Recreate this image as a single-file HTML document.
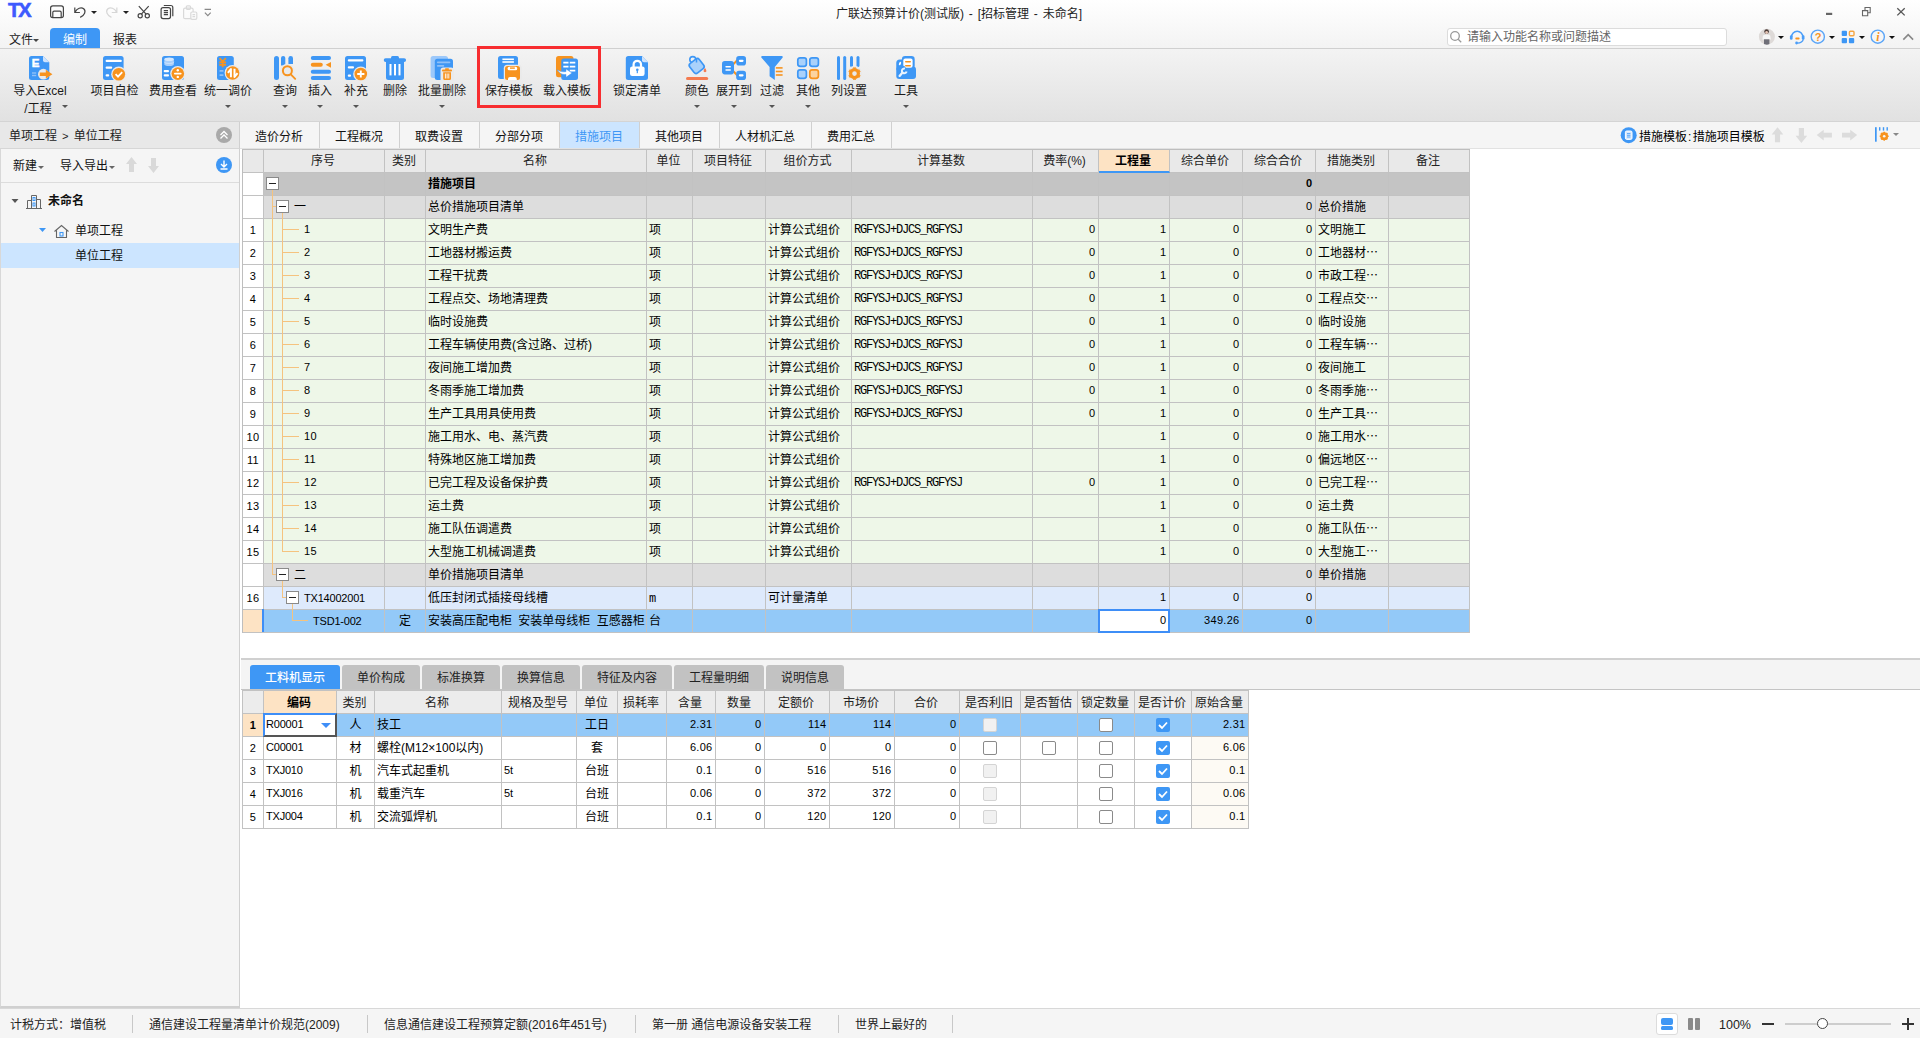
<!DOCTYPE html><html><head><meta charset="utf-8"><title>广联达预算计价</title><style>
*{box-sizing:border-box;margin:0;padding:0}
html,body{width:1920px;height:1038px;overflow:hidden;background:#fff}
body{position:relative;font-family:"Liberation Sans","Noto Sans CJK SC",sans-serif;font-size:12px;color:#000;line-height:1}
.ab{position:absolute}
.t{position:absolute;white-space:nowrap;line-height:14px;height:14px}
.c{position:absolute;white-space:nowrap;overflow:hidden;border-right:1px solid #c2c2c2;border-bottom:1px solid #c2c2c2;font-size:12px;line-height:22px;height:23px;padding:0 2px}
.r{text-align:right;padding-right:3px}
.m{text-align:center}
.num{font-family:"Liberation Mono","Noto Sans CJK SC",monospace;letter-spacing:-1.2px}
.n2{font-family:"Liberation Sans",sans-serif;font-size:11px;letter-spacing:0.3px}
.c.n2{line-height:20px}
.n2.cd{letter-spacing:-0.2px}
.c.r.n2{padding-right:2.5px}
.h{background:#e9e9e9;text-align:center;color:#222;padding:0 3px 0 1px}
.lbl{position:absolute;white-space:nowrap;text-align:center;font-size:12px;line-height:16px;color:#1a1a1a}
.dd{position:absolute;width:0;height:0;border-left:3px solid transparent;border-right:3px solid transparent;border-top:3px solid #555}
.cb{position:absolute;width:14px;height:14px;border:1px solid #8a8a8a;border-radius:2px;background:#fff}
.cbd{position:absolute;width:14px;height:14px;border:1px solid #d4d4d4;border-radius:2px;background:#f1f1f1}
.cbc{position:absolute;width:14px;height:14px;border-radius:2px;background:#3e97f5}
</style></head><body><div class="ab" style="left:0px;top:0px;width:1920px;height:48px;background:linear-gradient(#ffffff,#f3f3f3)"></div><div class="ab" style="left:0px;top:48px;width:1920px;height:1px;background:#d0d0d0"></div><div class="t" style="left:8px;top:0px;font-weight:bold;font-size:20px;line-height:20px;height:20px;color:#3d5afe;letter-spacing:-2px;-webkit-text-stroke:0.6px #3d5afe;font-family:'Liberation Sans',sans-serif">TX</div><svg class="ab" style="left:46px;top:2px" width="180" height="22" viewBox="0 0 180 22" fill="none" stroke="#444" stroke-width="1.2"><rect x="4.6" y="3.9" width="12.8" height="11.8" rx="2.2"/><path d="M6.8 15.7v-5.3a1.3 1.3 0 0 1 1.3-1.3h5.8a1.3 1.3 0 0 1 1.3 1.3v5.3"/><path d="M28.8 5.4v5.1h5.1 M29.2 10.1C31 6.3 35.2 4.6 37.7 6.8C40.4 9.2 38.6 13.2 34.2 15.4"/><path d="M70.85 5.4v5.1h-5.1 M70.45 10.1C68.65 6.3 64.45 4.6 61.95 6.8C59.25 9.2 61.05 13.2 65.45 15.4" stroke="#d6d6d6"/><path d="M92.8 4.2l7.3 8 M102.7 4.2l-7.3 8"/><circle cx="94.2" cy="13.7" r="2.1"/><circle cx="101.3" cy="13.7" r="2.1"/><rect x="115.1" y="5.6" width="9.4" height="11" rx="2"/><path d="M117.8 3.5h7a2 2 0 0 1 2 2v8.7 M117.8 8.6h4.2 M117.8 10.6h4.2 M117.8 12.6h4.2"/><g stroke="#d9d9d9"><rect x="137.6" y="6.1" width="9.5" height="10.6" rx="1.5"/><rect x="140.3" y="3.8" width="4.2" height="3.5" rx="1"/><rect x="144.8" y="10" width="6" height="7.3" rx="1.3" fill="#fbfbfb"/><path d="M146.5 12.6h2.6 M146.5 14.6h2.6"/></g><path d="M158.6 7.4h6.4 M158.9 10.6l2.9 3 2.9-3" stroke="#888"/></svg><div class="dd" style="left:91px;top:11px;border-top-color:#222"></div><div class="dd" style="left:123px;top:11px;border-top-color:#222"></div><div class="t" style="left:0px;top:7px;left:0;width:1918px;text-align:center;color:#222;word-spacing:1.5px">广联达预算计价(测试版) - [招标管理 - 未命名]</div><svg class="ab" style="left:1750px;top:0" width="170" height="48" viewBox="0 0 170 48" fill="none"><rect x="76" y="12.8" width="6.2" height="2.2" fill="#666"/><path d="M112.5 10.6h5.2v5.2h-5.2z M115 10.6v-3.1h5.2v5.2h-2.5" stroke="#666" stroke-width="1.1"/><path d="M147.3 8.2l7.4 7.2 M154.7 8.2l-7.4 7.2" stroke="#555" stroke-width="1.3"/><clipPath id="av"><circle cx="16.9" cy="36.7" r="8"/></clipPath><g clip-path="url(#av)"><rect x="8" y="28" width="18" height="18" fill="#dedad8"/><circle cx="16.6" cy="31.6" r="2.3" fill="#4a3a36"/><circle cx="16.6" cy="32.5" r="1.4" fill="#e6c6b6"/><path d="M13 35.5q3.6-2 7.2 0l.6 4h-8.4z" fill="#f6f6f6"/><rect x="14" y="39.3" width="5.4" height="6" fill="#6f6f78"/></g><path d="M41.5 37.2a5.7 5.9 0 0 1 11.4 0" stroke="#4a9df8" stroke-width="1.5"/><rect x="39.9" y="35.3" width="2.7" height="4.5" rx="1.3" fill="#4a9df8"/><rect x="51.8" y="35.3" width="2.7" height="4.5" rx="1.3" fill="#4a9df8"/><path d="M53.3 39.3a6.5 4.5 0 0 1-6 3.8" stroke="#4a9df8" stroke-width="1.3"/><circle cx="46.6" cy="43" r="1.4" fill="#4a9df8"/><rect x="45.3" y="37.6" width="4.3" height="1.8" rx=".9" fill="#f7931e"/><circle cx="67.8" cy="36.7" r="6.6" stroke="#5aa5f8" stroke-width="1.4"/><rect x="91.7" y="30.7" width="5.3" height="5.3" rx="1" fill="#3e97f5"/><rect x="99.4" y="31.2" width="4.6" height="4.6" rx="1" stroke="#f7a540" stroke-width="1.4"/><rect x="91.7" y="37.9" width="5.3" height="5.3" rx="1" fill="#3e97f5"/><rect x="98.9" y="37.9" width="5.3" height="5.3" rx="1" fill="#3e97f5"/><circle cx="127.8" cy="36.7" r="6.6" stroke="#5aa5f8" stroke-width="1.4"/><path d="M153.3 39.6l4.9-4.9 4.9 4.9" stroke="#888" stroke-width="1.6"/></svg><div class="t" style="left:9px;top:33px;color:#222">文件</div><div class="dd" style="left:33px;top:39px;border-top-color:#444"></div><div class="ab" style="left:50px;top:28px;width:50px;height:20px;background:#3e97f5;border-radius:4px 4px 0 0"></div><div class="t" style="left:50px;top:33px;width:50px;text-align:center;color:#fff">编制</div><div class="t" style="left:113px;top:33px;color:#222">报表</div><div class="ab" style="left:1447px;top:28px;width:280px;height:18px;background:#fff;border:1px solid #dcdcdc;border-radius:3px"></div><svg class="ab" style="left:1449px;top:30px" width="14" height="14" fill="none" stroke="#999" stroke-width="1.3"><circle cx="6" cy="6" r="4.3"/><path d="M9.2 9.2l3 3"/></svg><div class="t" style="left:1467px;top:30px;color:#666">请输入功能名称或问题描述</div><div class="t" style="left:1813px;top:31px;font-size:11px;font-weight:bold;color:#f7931e;width:10px;text-align:center;line-height:12px;height:12px">?</div><div class="t" style="left:1873px;top:31px;font-size:12px;font-style:italic;font-weight:bold;color:#f7931e;width:10px;text-align:center;line-height:12px;height:12px;font-family:'Liberation Serif',serif">i</div><div class="dd" style="left:1777.5px;top:36px;border-top-color:#111"></div><div class="dd" style="left:1828.5px;top:36px;border-top-color:#111"></div><div class="dd" style="left:1858.5px;top:36px;border-top-color:#111"></div><div class="dd" style="left:1888.5px;top:36px;border-top-color:#111"></div><div class="ab" style="left:0px;top:49px;width:1920px;height:73px;background:linear-gradient(#f3f3f3,#e1e1e1)"></div><div class="ab" style="left:0px;top:121px;width:1920px;height:1px;background:#d4d4d4"></div><svg class="ab" style="left:0;top:50px" width="960" height="36" viewBox="0 0 960 36"><path d="M31.5 6h11.5l6.3 6.3V27.5a2.5 2.5 0 0 1-2.5 2.5H31.5a2.5 2.5 0 0 1-2.5-2.5V8.5a2.5 2.5 0 0 1 2.5-2.5z" fill="#3e97f5"/><path d="M43 6l6.3 6.3h-4.3a2 2 0 0 1-2-2z" fill="#cfe4fd"/><text x="31.8" y="17.4" font-size="11.5" font-weight="bold" fill="#fff" stroke="#fff" stroke-width=".5" font-family="Liberation Sans,sans-serif">E</text><rect x="32" y="22.3" width="4.2" height="1.4" fill="#8fc0f8"/><rect x="32" y="24.8" width="4.2" height="1.4" fill="#8fc0f8"/><circle cx="43.4" cy="24.2" r="5.4" fill="#eaeaea"/><path d="M39.8 22.4h6v-2.6l6.6 4.4-6.6 4.4v-2.6h-6z" fill="#f7931e"/><rect x="103" y="6" width="20.6" height="24" rx="2.5" fill="#3e97f5"/><rect x="105.6" y="9.8" width="16.2" height="2.3" rx="1" fill="#fff"/><rect x="105.6" y="16.4" width="6.6" height="2.3" rx="1" fill="#fff"/><rect x="105.6" y="24.2" width="3.6" height="2.3" rx="1" fill="#fff"/><circle cx="118.8" cy="24.2" r="7.6" fill="#eaeaea"/><circle cx="118.8" cy="24.2" r="6.3" fill="#f7931e"/><path d="M115.6 24.2l2.4 2.4 4.2-4.4" stroke="#fff" stroke-width="1.8" fill="none"/><rect x="162" y="6" width="22" height="24" rx="2.5" fill="#3e97f5"/><path d="M164.3 9.2v5a4.8 1.8 0 0 0 9.6 0v-5z" fill="#a9cffb"/><ellipse cx="169.1" cy="9.2" rx="4.8" ry="1.8" fill="#d5e8fd"/><path d="M164.3 11.8a4.8 1.8 0 0 0 9.6 0" stroke="#d5e8fd" stroke-width=".7" fill="none"/><rect x="163.7" y="20" width="5.3" height="2.3" rx="1" fill="#fff"/><rect x="163.7" y="24.2" width="5.3" height="2.3" rx="1" fill="#fff"/><circle cx="177.8" cy="23.6" r="7.6" fill="#eaeaea"/><circle cx="177.8" cy="23.6" r="6.3" fill="#f7931e"/><rect x="174" y="22.8" width="7.6" height="1.7" rx=".8" fill="#fff"/><circle cx="177.8" cy="20.3" r="1.2" fill="#fff"/><circle cx="177.8" cy="26.9" r="1.2" fill="#fff"/><rect x="217" y="6" width="16.8" height="24" rx="2.5" fill="#3e97f5"/><path d="M219.5 8.2l3.2 3.4 3.2-3.4 M222.7 11.6v5.6 M219.3 12.4h6.8 M219.3 14.8h6.8" stroke="#f7931e" stroke-width="1.7" fill="none"/><rect x="219.4" y="20" width="4.2" height="1.8" rx=".9" fill="#8fc0f8"/><rect x="219.4" y="24.2" width="4.2" height="1.8" rx=".9" fill="#8fc0f8"/><circle cx="232.6" cy="23" r="8" fill="#eaeaea"/><circle cx="232.6" cy="23" r="6.8" fill="#f7931e"/><path d="M230.9 27.2v-8.2l-3 3.9 M234.5 18.8v8.2l3-3.9" fill="none" stroke="#fff" stroke-width="2" stroke-linejoin="round"/><rect x="274" y="6" width="5" height="24" rx="2.5" fill="#3e97f5"/><path d="M281 15.5v-7.4a2.15 2.15 0 0 1 4.3 0v7.4z" fill="#3e97f5"/><path d="M288.4 14v-5.8a2.3 2.3 0 0 1 4.6 0v5.8z" fill="#3e97f5"/><circle cx="287.4" cy="20.75" r="7" fill="#eaeaea"/><circle cx="287.4" cy="20.75" r="4.5" fill="none" stroke="#f7931e" stroke-width="2"/><path d="M290.8 24.3l4.4 4.5" stroke="#f7931e" stroke-width="1.9" stroke-linecap="round"/><rect x="310.8" y="6" width="20.2" height="4" rx="2" fill="#3e97f5"/><rect x="310.8" y="12.8" width="12" height="4" rx="2" fill="#f7931e"/><path d="M331 11.9v5.8l-5.4-2.9z" fill="#f7931e"/><rect x="310.8" y="19.8" width="20.2" height="4" rx="2" fill="#3e97f5"/><rect x="310.8" y="26" width="20.2" height="4" rx="2" fill="#3e97f5"/><rect x="345" y="6" width="21" height="24" rx="2.5" fill="#3e97f5"/><rect x="347.8" y="9.3" width="15.6" height="2.3" rx="1" fill="#fff"/><rect x="347.8" y="16.3" width="6.2" height="2.3" rx="1" fill="#fff"/><rect x="347.8" y="24.4" width="3.2" height="2.3" rx="1" fill="#fff"/><circle cx="360.8" cy="24" r="7.6" fill="#eaeaea"/><circle cx="360.8" cy="24" r="6.3" fill="#f7931e"/><path d="M357.2 24h7.2 M360.8 20.4v7.2" stroke="#fff" stroke-width="1.9"/><rect x="391" y="6" width="8" height="4" rx="1.5" fill="#3e97f5"/><rect x="383.75" y="8.2" width="22.3" height="3.8" rx="1.9" fill="#3e97f5"/><path d="M386 11h18v16.5a2.5 2.5 0 0 1-2.5 2.5h-13a2.5 2.5 0 0 1-2.5-2.5z" fill="#3e97f5"/><rect x="389.5" y="14" width="2" height="11.4" fill="#fff"/><rect x="394" y="14" width="2" height="11.4" fill="#fff"/><rect x="398.5" y="14" width="2" height="11.4" fill="#fff"/><rect x="430.6" y="6" width="17.4" height="22" rx="2.5" fill="#9cc8fa"/><rect x="434.8" y="8.8" width="18.2" height="21.2" rx="2.5" fill="#3e97f5"/><rect x="436.9" y="11.4" width="13.5" height="1.8" rx=".9" fill="#8fc0f8"/><rect x="436.9" y="15" width="7.3" height="1.7" rx=".8" fill="#8fc0f8"/><path d="M440.5 31v-10.5a3 3 0 0 1 3-3h7.5a3 3 0 0 1 3 3v10.5z" fill="#eaeaea"/><rect x="442" y="19.5" width="10" height="1.9" rx=".9" fill="#f7931e"/><rect x="445" y="18.3" width="4" height="1.6" rx=".7" fill="#f7931e"/><path d="M443.2 22.2h7.8v6.3a1.5 1.5 0 0 1-1.5 1.5h-4.8a1.5 1.5 0 0 1-1.5-1.5z" fill="#f7931e"/><path d="M445.4 23.5v5 M447.1 23.5v5 M448.8 23.5v5" stroke="#fff" stroke-width=".9"/><rect x="498" y="6" width="20" height="23" rx="2.5" fill="#3e97f5"/><rect x="502.4" y="8.5" width="11.5" height="1.6" fill="#fff"/><rect x="502.4" y="11.2" width="11.5" height="1.6" fill="#fff"/><rect x="503.8" y="14.8" width="18" height="17" rx="3.5" fill="#eaeaea"/><rect x="505" y="16" width="15" height="14" rx="2.5" fill="#f7931e"/><rect x="507.6" y="16.8" width="9.6" height="3.4" rx="1.5" fill="#fff"/><rect x="510" y="17.4" width="4.8" height="1.4" fill="#f7931e"/><path d="M508 30v-1a2 2 0 0 1 2-2h4.8a2 2 0 0 1 2 2v1z" fill="#fff"/><rect x="556" y="6" width="17.5" height="21.3" rx="2.5" fill="#f7931e"/><rect x="561.25" y="8.6" width="16.75" height="21.4" rx="2.5" fill="#3e97f5"/><path d="M563.3 12.6h5.2 M569.8 12.6h5.5 M563.3 16.6h5.2 M569.8 16.6h5.5 M569.8 20.6h5.5" stroke="#fff" stroke-width="1.6"/><path d="M557.2 19.8c2 3.6 5 5 8.8 4.6v2.9l6-4.2-6-4.2v2.7c-3.6.6-6.4-.2-8.8-1.8z" fill="#fff" stroke="#3e97f5" stroke-width=".5"/><path d="M628.3 6h13.7l6 6.3V27.5a2.5 2.5 0 0 1-2.5 2.5H628.3a2.5 2.5 0 0 1-2.5-2.5V8.5a2.5 2.5 0 0 1 2.5-2.5z" fill="#3e97f5"/><path d="M642 6l6 6.3h-4a2 2 0 0 1-2-2z" fill="#cfe4fd"/><rect x="630" y="16.4" width="14.6" height="9.6" rx="2.2" fill="#fff"/><path d="M633.6 17v-2.5a3.7 3.7 0 0 1 7.4 0v2.5" stroke="#fff" stroke-width="2.2" fill="none"/><circle cx="637.3" cy="19.8" r="1.3" fill="#3e97f5"/><rect x="636.7" y="20" width="1.2" height="3.2" fill="#3e97f5"/><circle cx="692.8" cy="9.6" r="3" fill="none" stroke="#3e97f5" stroke-width="1.6"/><rect x="690.7" y="10" width="12" height="12" rx="2.5" fill="#a9d1fb" stroke="#3e97f5" stroke-width="1.7" transform="rotate(-38 696.7 16)"/><path d="M696.5 8.5v4" stroke="#3e97f5" stroke-width="1.5"/><path d="M705 18c1.7 2.2 1.9 4.2 0 4.2s-1.7-2 0-4.2z" fill="#f47b50"/><rect x="686" y="27" width="22.2" height="3" rx="1.5" fill="#f47b50"/><path d="M733 14.5l4.5-4.5 M733 21l4.5 4.5" stroke="#f7931e" stroke-width="2"/><rect x="722" y="11" width="12" height="13.4" rx="2.8" fill="#3e97f5"/><rect x="725.3" y="16" width="5.7" height="1.6" rx=".8" fill="#fff"/><rect x="725.3" y="19.2" width="5.7" height="1.6" rx=".8" fill="#fff"/><rect x="736.2" y="6" width="9.8" height="9.5" rx="2.8" fill="#3e97f5"/><rect x="738.8" y="9.7" width="4.8" height="2.2" rx="1.1" fill="#fff"/><rect x="736.2" y="20.7" width="9.8" height="9.3" rx="2.8" fill="#3e97f5"/><rect x="738.8" y="24.2" width="4.8" height="2.2" rx="1.1" fill="#fff"/><path d="M762.3 6H781.7a1 1 0 0 1 .8 1.7L774.8 17V30L769.6 26.3V17L761.5 7.7a1 1 0 0 1 .8-1.7z" fill="#3e97f5"/><rect x="775.8" y="17.1" width="6.8" height="1.6" fill="#f7931e"/><rect x="775.8" y="20.7" width="6.8" height="1.6" fill="#f7931e"/><rect x="775.8" y="24.2" width="6.8" height="1.6" fill="#f7931e"/><rect x="797.8" y="7.8" width="8.6" height="8.6" rx="2.3" fill="#a9d1fb" stroke="#3e97f5" stroke-width="1.7"/><rect x="809.8" y="7.8" width="8.6" height="8.6" rx="2.3" fill="#a9d1fb" stroke="#3e97f5" stroke-width="1.7"/><rect x="797.8" y="19.8" width="8.6" height="8.6" rx="2.3" fill="#a9d1fb" stroke="#3e97f5" stroke-width="1.7"/><rect x="809.8" y="19.8" width="8.6" height="8.6" rx="2.3" fill="#fbd3a0" stroke="#f7931e" stroke-width="1.7"/><rect x="837" y="6" width="3" height="24" rx="1.5" fill="#3e97f5"/><rect x="843.2" y="6" width="3" height="24" rx="1.5" fill="#3e97f5"/><rect x="850" y="6" width="3" height="11" rx="1.5" fill="#3e97f5"/><rect x="856.5" y="6" width="3" height="11" rx="1.5" fill="#3e97f5"/><circle cx="854.5" cy="23.6" r="7.6" fill="#eaeaea"/><circle cx="854.5" cy="23.6" r="3.9" fill="none" stroke="#f7931e" stroke-width="3.2"/><path d="M858.83 26.1L859.87 26.7" stroke="#f7931e" stroke-width="3" stroke-linecap="butt"/><path d="M854.5 28.6L854.5 29.8" stroke="#f7931e" stroke-width="3" stroke-linecap="butt"/><path d="M850.17 26.1L849.13 26.7" stroke="#f7931e" stroke-width="3" stroke-linecap="butt"/><path d="M850.17 21.1L849.13 20.5" stroke="#f7931e" stroke-width="3" stroke-linecap="butt"/><path d="M854.5 18.6L854.5 17.4" stroke="#f7931e" stroke-width="3" stroke-linecap="butt"/><path d="M858.83 21.1L859.87 20.5" stroke="#f7931e" stroke-width="3" stroke-linecap="butt"/><rect x="896.25" y="9.5" width="9" height="12" rx="3.5" fill="#3e97f5"/><rect x="896.25" y="16.5" width="19.75" height="12.5" rx="3" fill="#3e97f5"/><rect x="901.9" y="6" width="12.8" height="13" rx="3.2" fill="#3e97f5"/><rect x="903.3" y="8.6" width="9.3" height="9.2" rx="2" fill="#fff"/><rect x="905" y="11" width="6" height="1.6" rx=".8" fill="#f7931e"/><rect x="905" y="15" width="6" height="1.6" rx=".8" fill="#f7931e"/><path d="M904 15.5l2 2.5h-6z" fill="#3e97f5"/><ellipse cx="900" cy="13.5" rx="1" ry="1.9" fill="#fff" transform="rotate(20 900 13.5)"/><path d="M899.6 25.9l2.9-3.4" stroke="#eaf4ff" stroke-width="2.3" stroke-linecap="round"/><path d="M905 18.6a2.4 2.4 0 1 0 1.6 2.9" stroke="#eaf4ff" stroke-width="2" fill="none"/></svg><div class="lbl" style="left:0px;top:83px;width:80px">导入Excel</div><div class="lbl" style="left:74.5px;top:83px;width:80px">项目自检</div><div class="lbl" style="left:133px;top:83px;width:80px">费用查看</div><div class="lbl" style="left:188px;top:83px;width:80px">统一调价</div><div class="dd" style="left:225px;top:105px;border-top-color:#555"></div><div class="lbl" style="left:245px;top:83px;width:80px">查询</div><div class="dd" style="left:282px;top:105px;border-top-color:#555"></div><div class="lbl" style="left:280px;top:83px;width:80px">插入</div><div class="dd" style="left:317px;top:105px;border-top-color:#555"></div><div class="lbl" style="left:316px;top:83px;width:80px">补充</div><div class="dd" style="left:353px;top:105px;border-top-color:#555"></div><div class="lbl" style="left:355px;top:83px;width:80px">删除</div><div class="lbl" style="left:402px;top:83px;width:80px">批量删除</div><div class="dd" style="left:439px;top:105px;border-top-color:#555"></div><div class="lbl" style="left:469px;top:83px;width:80px">保存模板</div><div class="lbl" style="left:527px;top:83px;width:80px">载入模板</div><div class="lbl" style="left:597px;top:83px;width:80px">锁定清单</div><div class="lbl" style="left:657px;top:83px;width:80px">颜色</div><div class="dd" style="left:694px;top:105px;border-top-color:#555"></div><div class="lbl" style="left:694px;top:83px;width:80px">展开到</div><div class="dd" style="left:731px;top:105px;border-top-color:#555"></div><div class="lbl" style="left:732px;top:83px;width:80px">过滤</div><div class="dd" style="left:769px;top:105px;border-top-color:#555"></div><div class="lbl" style="left:768px;top:83px;width:80px">其他</div><div class="dd" style="left:805px;top:105px;border-top-color:#555"></div><div class="lbl" style="left:809px;top:83px;width:80px">列设置</div><div class="lbl" style="left:866px;top:83px;width:80px">工具</div><div class="dd" style="left:903px;top:105px;border-top-color:#555"></div><div class="lbl" style="left:-2px;top:101px;width:80px">/工程</div><div class="dd" style="left:62px;top:105px;border-top-color:#555"></div><div class="ab" style="left:477px;top:46px;width:124px;height:61.5px;border:3px solid #f72d30"></div><div class="ab" style="left:0px;top:122px;width:240px;height:886px;background:#f5f5f5;border-right:1px solid #d0d0d0;border-left:1px solid #d8d8d8;border-bottom:2px solid #d0d0d0"></div><div class="ab" style="left:0px;top:122px;width:240px;height:27px;background:#e8e8e8;border-bottom:1px solid #d6d6d6;border-right:1px solid #d0d0d0"></div><div class="t" style="left:9px;top:129px;color:#222">单项工程<span style="font-family:'Liberation Mono',monospace;font-size:11px;padding:0 5px 0 5px">&gt;</span>单位工程</div><svg class="ab" style="left:216px;top:127px" width="16" height="16"><circle cx="8" cy="8" r="8" fill="#a9a9a9"/><path d="M4.5 8l3.5-3.5 3.5 3.5 M4.5 11.5l3.5-3.5 3.5 3.5" stroke="#fff" stroke-width="1.3" fill="none"/></svg><div class="t" style="left:13px;top:159px;color:#111">新建</div><div class="dd" style="left:38px;top:166px;border-top-color:#666"></div><div class="t" style="left:60px;top:159px;color:#111">导入导出</div><div class="dd" style="left:109px;top:166px;border-top-color:#666"></div><svg class="ab" style="left:124px;top:156px" width="40" height="18" fill="#d9d9d9"><path d="M7.5 1l5.5 7h-3v8h-5v-8h-3z"/><path d="M29.5 17l5.5-7h-3v-8h-5v8h-3z"/></svg><svg class="ab" style="left:216px;top:157px" width="16" height="16"><circle cx="8" cy="8" r="8" fill="#3e97f5"/><path d="M8 3.5v6 M5 7l3 3 3-3 M4.5 12h7" stroke="#fff" stroke-width="1.4" fill="none"/></svg><div class="ab" style="left:1px;top:182px;width:238px;height:1px;background:#dcdcdc"></div><div class="ab" style="left:1px;top:243px;width:238px;height:25px;background:#cce5ff"></div><svg class="ab" style="left:10px;top:192.5px" width="70" height="50" fill="none"><path d="M1.5 6h7l-3.5 4z" fill="#555"/><path d="M17.5 15.5v-8h4v8 M21.5 15.5v-13h5v13 M26.5 15.5v-9h4v9 M16 15.5h16" stroke="#666" stroke-width="1"/><rect x="23" y="4.5" width="2" height="3" fill="none" stroke="#3e97f5" stroke-width="1"/><rect x="23" y="10" width="2" height="3" fill="none" stroke="#3e97f5" stroke-width="1"/><path d="M29 35h7l-3.5 4z" fill="#3e97f5"/><path d="M44.5 38.5l7-6 7 6 M46.5 37.5v7h10v-7" stroke="#666" stroke-width="1.1"/><rect x="50" y="39.5" width="3" height="3.5" fill="none" stroke="#3e97f5" stroke-width="1.1"/></svg><div class="t" style="left:48px;top:194px;font-weight:bold;color:#111">未命名</div><div class="t" style="left:75px;top:224px;color:#111">单项工程</div><div class="t" style="left:75px;top:249px;color:#111">单位工程</div><div class="ab" style="left:240px;top:122px;width:1680px;height:27px;background:#f5f5f5"></div><div class="ab" style="left:240px;top:148px;width:1680px;height:1px;background:#e2e2e2"></div><div class="ab" style="left:240px;top:122px;width:80px;height:26px;border-right:1px solid #d0d0d0"></div><div class="t" style="left:239px;top:130px;width:80px;text-align:center;color:#111">造价分析</div><div class="ab" style="left:320px;top:122px;width:80px;height:26px;border-right:1px solid #d0d0d0"></div><div class="t" style="left:319px;top:130px;width:80px;text-align:center;color:#111">工程概况</div><div class="ab" style="left:400px;top:122px;width:80px;height:26px;border-right:1px solid #d0d0d0"></div><div class="t" style="left:399px;top:130px;width:80px;text-align:center;color:#111">取费设置</div><div class="ab" style="left:480px;top:122px;width:80px;height:26px;border-right:1px solid #d0d0d0"></div><div class="t" style="left:479px;top:130px;width:80px;text-align:center;color:#111">分部分项</div><div class="ab" style="left:560px;top:122px;width:80px;height:26px;background:#cce5ff;border-right:1px solid #d0d0d0"></div><div class="t" style="left:559px;top:130px;width:80px;text-align:center;color:#3e97f5">措施项目</div><div class="ab" style="left:640px;top:122px;width:80px;height:26px;border-right:1px solid #d0d0d0"></div><div class="t" style="left:639px;top:130px;width:80px;text-align:center;color:#111">其他项目</div><div class="ab" style="left:720px;top:122px;width:92px;height:26px;border-right:1px solid #d0d0d0"></div><div class="t" style="left:719px;top:130px;width:92px;text-align:center;color:#111">人材机汇总</div><div class="ab" style="left:812px;top:122px;width:80px;height:26px;border-right:1px solid #d0d0d0"></div><div class="t" style="left:811px;top:130px;width:80px;text-align:center;color:#111">费用汇总</div><svg class="ab" style="left:1620px;top:127px" width="18" height="17"><circle cx="8.7" cy="8.2" r="8" fill="#3e97f5"/><rect x="5.4" y="4" width="6.6" height="8.4" rx="1.3" fill="#d6e9fe" stroke="#fff" stroke-width="1"/><path d="M7 6.6h3.4 M7 8.3h3.4 M7 10h3.4" stroke="#3e97f5" stroke-width=".8"/></svg><div class="t" style="left:1639px;top:130px;color:#000">措施模板<span style="padding:0 1.5px 0 1px">:</span>措施项目模板</div><svg class="ab" style="left:1770px;top:126px" width="90" height="18" fill="#dcdcdc"><path d="M7.5 1.2l5.8 7.3h-3.2v7.7h-5.2v-7.7h-3.2z"/><path d="M31.4 17l5.8-7.3h-3.2v-7.7h-5.2v7.7h-3.2z"/><path d="M46.7 9.1l7-5.4v3h8.2v4.8h-8.2v3z"/><path d="M87.2 9.1l-7-5.4v3h-8.2v4.8h8.2v3z"/></svg><svg class="ab" style="left:1874px;top:127px" width="16" height="16"><rect x="1" y="0.2" width="1.7" height="14.5" fill="#3e97f5"/><rect x="5" y="0.2" width="1.4" height="3.4" fill="#3e97f5"/><rect x="8.8" y="0.2" width="1.4" height="3.4" fill="#3e97f5"/><rect x="12.5" y="0.2" width="1.4" height="3.4" fill="#3e97f5"/><circle cx="10.2" cy="9.2" r="2.7" fill="none" stroke="#f7931e" stroke-width="2.4"/><path d="M10.2 4.7v9 M5.7 9.2h9 M7 6l6.4 6.4 M13.4 6l-6.4 6.4" stroke="#f7931e" stroke-width="1.5"/><circle cx="10.2" cy="9.2" r="1.3" fill="#f5f5f5"/></svg><div class="dd" style="left:1892.5px;top:133px;border-top-color:#888"></div><div class="ab" style="left:242px;top:149px;width:1228px;height:1px;background:#bebebe"></div><div class="ab" style="left:242px;top:149px;width:1px;height:484px;background:#bebebe"></div><div class="ab" style="left:1469px;top:149px;width:1px;height:484px;background:#bebebe"></div><div class="c h" style="left:243px;top:150px;width:21px;height:23px;line-height:23px;"></div><div class="c h" style="left:264px;top:150px;width:121px;height:23px;line-height:23px;">序号</div><div class="c h" style="left:385px;top:150px;width:41px;height:23px;line-height:23px;">类别</div><div class="c h" style="left:426px;top:150px;width:221px;height:23px;line-height:23px;">名称</div><div class="c h" style="left:647px;top:150px;width:46px;height:23px;line-height:23px;">单位</div><div class="c h" style="left:693px;top:150px;width:73px;height:23px;line-height:23px;">项目特征</div><div class="c h" style="left:766px;top:150px;width:86px;height:23px;line-height:23px;">组价方式</div><div class="c h" style="left:852px;top:150px;width:181px;height:23px;line-height:23px;">计算基数</div><div class="c h" style="left:1033px;top:150px;width:66px;height:23px;line-height:23px;">费率(%)</div><div class="c h" style="left:1099px;top:150px;width:71px;height:23px;line-height:23px;background:#fde3c4;font-weight:bold;color:#000;border-bottom:2px solid #3e97f5;">工程量</div><div class="c h" style="left:1170px;top:150px;width:73px;height:23px;line-height:23px;">综合单价</div><div class="c h" style="left:1243px;top:150px;width:73px;height:23px;line-height:23px;">综合合价</div><div class="c h" style="left:1316px;top:150px;width:73px;height:23px;line-height:23px;">措施类别</div><div class="c h" style="left:1389px;top:150px;width:81px;height:23px;line-height:23px;">备注</div><div class="c m n2" style="left:243px;top:173px;width:21px;background:#fff;padding:0;padding-top:1px"></div><div class="c " style="left:264px;top:173px;width:121px;background:#c4c4c4;"></div><div class="c m" style="left:385px;top:173px;width:41px;background:#c4c4c4;"></div><div class="c " style="left:426px;top:173px;width:221px;background:#c4c4c4;"><b>措施项目</b></div><div class="c " style="left:647px;top:173px;width:46px;background:#c4c4c4;"></div><div class="c " style="left:693px;top:173px;width:73px;background:#c4c4c4;"></div><div class="c " style="left:766px;top:173px;width:86px;background:#c4c4c4;"></div><div class="c num" style="left:852px;top:173px;width:181px;background:#c4c4c4;"></div><div class="c r n2" style="left:1033px;top:173px;width:66px;background:#c4c4c4;"></div><div class="c r n2" style="left:1099px;top:173px;width:71px;background:#c4c4c4;"></div><div class="c r n2" style="left:1170px;top:173px;width:73px;background:#c4c4c4;"></div><div class="c r n2" style="left:1243px;top:173px;width:73px;background:#c4c4c4;"><b>0</b></div><div class="c " style="left:1316px;top:173px;width:73px;background:#c4c4c4;"></div><div class="c " style="left:1389px;top:173px;width:81px;background:#c4c4c4;"></div><div class="c m n2" style="left:243px;top:196px;width:21px;background:#fff;padding:0;padding-top:1px"></div><div class="c " style="left:264px;top:196px;width:121px;background:#dddddd;"></div><div class="c m" style="left:385px;top:196px;width:41px;background:#dddddd;"></div><div class="c " style="left:426px;top:196px;width:221px;background:#dddddd;">总价措施项目清单</div><div class="c " style="left:647px;top:196px;width:46px;background:#dddddd;"></div><div class="c " style="left:693px;top:196px;width:73px;background:#dddddd;"></div><div class="c " style="left:766px;top:196px;width:86px;background:#dddddd;"></div><div class="c num" style="left:852px;top:196px;width:181px;background:#dddddd;"></div><div class="c r n2" style="left:1033px;top:196px;width:66px;background:#dddddd;"></div><div class="c r n2" style="left:1099px;top:196px;width:71px;background:#dddddd;"></div><div class="c r n2" style="left:1170px;top:196px;width:73px;background:#dddddd;"></div><div class="c r n2" style="left:1243px;top:196px;width:73px;background:#dddddd;">0</div><div class="c " style="left:1316px;top:196px;width:73px;background:#dddddd;">总价措施</div><div class="c " style="left:1389px;top:196px;width:81px;background:#dddddd;"></div><div class="c m n2" style="left:243px;top:219px;width:21px;background:#fff;padding:0;padding-top:1px">1</div><div class="c " style="left:264px;top:219px;width:121px;background:#eef7e8;"></div><div class="c m" style="left:385px;top:219px;width:41px;background:#eef7e8;"></div><div class="c " style="left:426px;top:219px;width:221px;background:#eef7e8;">文明生产费</div><div class="c " style="left:647px;top:219px;width:46px;background:#eef7e8;">项</div><div class="c " style="left:693px;top:219px;width:73px;background:#eef7e8;"></div><div class="c " style="left:766px;top:219px;width:86px;background:#eef7e8;">计算公式组价</div><div class="c num" style="left:852px;top:219px;width:181px;background:#eef7e8;">RGFYSJ+DJCS_RGFYSJ</div><div class="c r n2" style="left:1033px;top:219px;width:66px;background:#eef7e8;">0</div><div class="c r n2" style="left:1099px;top:219px;width:71px;background:#eef7e8;">1</div><div class="c r n2" style="left:1170px;top:219px;width:73px;background:#eef7e8;">0</div><div class="c r n2" style="left:1243px;top:219px;width:73px;background:#eef7e8;">0</div><div class="c " style="left:1316px;top:219px;width:73px;background:#eef7e8;">文明施工</div><div class="c " style="left:1389px;top:219px;width:81px;background:#eef7e8;"></div><div class="c m n2" style="left:243px;top:242px;width:21px;background:#fff;padding:0;padding-top:1px">2</div><div class="c " style="left:264px;top:242px;width:121px;background:#eef7e8;"></div><div class="c m" style="left:385px;top:242px;width:41px;background:#eef7e8;"></div><div class="c " style="left:426px;top:242px;width:221px;background:#eef7e8;">工地器材搬运费</div><div class="c " style="left:647px;top:242px;width:46px;background:#eef7e8;">项</div><div class="c " style="left:693px;top:242px;width:73px;background:#eef7e8;"></div><div class="c " style="left:766px;top:242px;width:86px;background:#eef7e8;">计算公式组价</div><div class="c num" style="left:852px;top:242px;width:181px;background:#eef7e8;">RGFYSJ+DJCS_RGFYSJ</div><div class="c r n2" style="left:1033px;top:242px;width:66px;background:#eef7e8;">0</div><div class="c r n2" style="left:1099px;top:242px;width:71px;background:#eef7e8;">1</div><div class="c r n2" style="left:1170px;top:242px;width:73px;background:#eef7e8;">0</div><div class="c r n2" style="left:1243px;top:242px;width:73px;background:#eef7e8;">0</div><div class="c " style="left:1316px;top:242px;width:73px;background:#eef7e8;">工地器材⋯</div><div class="c " style="left:1389px;top:242px;width:81px;background:#eef7e8;"></div><div class="c m n2" style="left:243px;top:265px;width:21px;background:#fff;padding:0;padding-top:1px">3</div><div class="c " style="left:264px;top:265px;width:121px;background:#eef7e8;"></div><div class="c m" style="left:385px;top:265px;width:41px;background:#eef7e8;"></div><div class="c " style="left:426px;top:265px;width:221px;background:#eef7e8;">工程干扰费</div><div class="c " style="left:647px;top:265px;width:46px;background:#eef7e8;">项</div><div class="c " style="left:693px;top:265px;width:73px;background:#eef7e8;"></div><div class="c " style="left:766px;top:265px;width:86px;background:#eef7e8;">计算公式组价</div><div class="c num" style="left:852px;top:265px;width:181px;background:#eef7e8;">RGFYSJ+DJCS_RGFYSJ</div><div class="c r n2" style="left:1033px;top:265px;width:66px;background:#eef7e8;">0</div><div class="c r n2" style="left:1099px;top:265px;width:71px;background:#eef7e8;">1</div><div class="c r n2" style="left:1170px;top:265px;width:73px;background:#eef7e8;">0</div><div class="c r n2" style="left:1243px;top:265px;width:73px;background:#eef7e8;">0</div><div class="c " style="left:1316px;top:265px;width:73px;background:#eef7e8;">市政工程⋯</div><div class="c " style="left:1389px;top:265px;width:81px;background:#eef7e8;"></div><div class="c m n2" style="left:243px;top:288px;width:21px;background:#fff;padding:0;padding-top:1px">4</div><div class="c " style="left:264px;top:288px;width:121px;background:#eef7e8;"></div><div class="c m" style="left:385px;top:288px;width:41px;background:#eef7e8;"></div><div class="c " style="left:426px;top:288px;width:221px;background:#eef7e8;">工程点交、场地清理费</div><div class="c " style="left:647px;top:288px;width:46px;background:#eef7e8;">项</div><div class="c " style="left:693px;top:288px;width:73px;background:#eef7e8;"></div><div class="c " style="left:766px;top:288px;width:86px;background:#eef7e8;">计算公式组价</div><div class="c num" style="left:852px;top:288px;width:181px;background:#eef7e8;">RGFYSJ+DJCS_RGFYSJ</div><div class="c r n2" style="left:1033px;top:288px;width:66px;background:#eef7e8;">0</div><div class="c r n2" style="left:1099px;top:288px;width:71px;background:#eef7e8;">1</div><div class="c r n2" style="left:1170px;top:288px;width:73px;background:#eef7e8;">0</div><div class="c r n2" style="left:1243px;top:288px;width:73px;background:#eef7e8;">0</div><div class="c " style="left:1316px;top:288px;width:73px;background:#eef7e8;">工程点交⋯</div><div class="c " style="left:1389px;top:288px;width:81px;background:#eef7e8;"></div><div class="c m n2" style="left:243px;top:311px;width:21px;background:#fff;padding:0;padding-top:1px">5</div><div class="c " style="left:264px;top:311px;width:121px;background:#eef7e8;"></div><div class="c m" style="left:385px;top:311px;width:41px;background:#eef7e8;"></div><div class="c " style="left:426px;top:311px;width:221px;background:#eef7e8;">临时设施费</div><div class="c " style="left:647px;top:311px;width:46px;background:#eef7e8;">项</div><div class="c " style="left:693px;top:311px;width:73px;background:#eef7e8;"></div><div class="c " style="left:766px;top:311px;width:86px;background:#eef7e8;">计算公式组价</div><div class="c num" style="left:852px;top:311px;width:181px;background:#eef7e8;">RGFYSJ+DJCS_RGFYSJ</div><div class="c r n2" style="left:1033px;top:311px;width:66px;background:#eef7e8;">0</div><div class="c r n2" style="left:1099px;top:311px;width:71px;background:#eef7e8;">1</div><div class="c r n2" style="left:1170px;top:311px;width:73px;background:#eef7e8;">0</div><div class="c r n2" style="left:1243px;top:311px;width:73px;background:#eef7e8;">0</div><div class="c " style="left:1316px;top:311px;width:73px;background:#eef7e8;">临时设施</div><div class="c " style="left:1389px;top:311px;width:81px;background:#eef7e8;"></div><div class="c m n2" style="left:243px;top:334px;width:21px;background:#fff;padding:0;padding-top:1px">6</div><div class="c " style="left:264px;top:334px;width:121px;background:#eef7e8;"></div><div class="c m" style="left:385px;top:334px;width:41px;background:#eef7e8;"></div><div class="c " style="left:426px;top:334px;width:221px;background:#eef7e8;">工程车辆使用费(含过路、过桥)</div><div class="c " style="left:647px;top:334px;width:46px;background:#eef7e8;">项</div><div class="c " style="left:693px;top:334px;width:73px;background:#eef7e8;"></div><div class="c " style="left:766px;top:334px;width:86px;background:#eef7e8;">计算公式组价</div><div class="c num" style="left:852px;top:334px;width:181px;background:#eef7e8;">RGFYSJ+DJCS_RGFYSJ</div><div class="c r n2" style="left:1033px;top:334px;width:66px;background:#eef7e8;">0</div><div class="c r n2" style="left:1099px;top:334px;width:71px;background:#eef7e8;">1</div><div class="c r n2" style="left:1170px;top:334px;width:73px;background:#eef7e8;">0</div><div class="c r n2" style="left:1243px;top:334px;width:73px;background:#eef7e8;">0</div><div class="c " style="left:1316px;top:334px;width:73px;background:#eef7e8;">工程车辆⋯</div><div class="c " style="left:1389px;top:334px;width:81px;background:#eef7e8;"></div><div class="c m n2" style="left:243px;top:357px;width:21px;background:#fff;padding:0;padding-top:1px">7</div><div class="c " style="left:264px;top:357px;width:121px;background:#eef7e8;"></div><div class="c m" style="left:385px;top:357px;width:41px;background:#eef7e8;"></div><div class="c " style="left:426px;top:357px;width:221px;background:#eef7e8;">夜间施工增加费</div><div class="c " style="left:647px;top:357px;width:46px;background:#eef7e8;">项</div><div class="c " style="left:693px;top:357px;width:73px;background:#eef7e8;"></div><div class="c " style="left:766px;top:357px;width:86px;background:#eef7e8;">计算公式组价</div><div class="c num" style="left:852px;top:357px;width:181px;background:#eef7e8;">RGFYSJ+DJCS_RGFYSJ</div><div class="c r n2" style="left:1033px;top:357px;width:66px;background:#eef7e8;">0</div><div class="c r n2" style="left:1099px;top:357px;width:71px;background:#eef7e8;">1</div><div class="c r n2" style="left:1170px;top:357px;width:73px;background:#eef7e8;">0</div><div class="c r n2" style="left:1243px;top:357px;width:73px;background:#eef7e8;">0</div><div class="c " style="left:1316px;top:357px;width:73px;background:#eef7e8;">夜间施工</div><div class="c " style="left:1389px;top:357px;width:81px;background:#eef7e8;"></div><div class="c m n2" style="left:243px;top:380px;width:21px;background:#fff;padding:0;padding-top:1px">8</div><div class="c " style="left:264px;top:380px;width:121px;background:#eef7e8;"></div><div class="c m" style="left:385px;top:380px;width:41px;background:#eef7e8;"></div><div class="c " style="left:426px;top:380px;width:221px;background:#eef7e8;">冬雨季施工增加费</div><div class="c " style="left:647px;top:380px;width:46px;background:#eef7e8;">项</div><div class="c " style="left:693px;top:380px;width:73px;background:#eef7e8;"></div><div class="c " style="left:766px;top:380px;width:86px;background:#eef7e8;">计算公式组价</div><div class="c num" style="left:852px;top:380px;width:181px;background:#eef7e8;">RGFYSJ+DJCS_RGFYSJ</div><div class="c r n2" style="left:1033px;top:380px;width:66px;background:#eef7e8;">0</div><div class="c r n2" style="left:1099px;top:380px;width:71px;background:#eef7e8;">1</div><div class="c r n2" style="left:1170px;top:380px;width:73px;background:#eef7e8;">0</div><div class="c r n2" style="left:1243px;top:380px;width:73px;background:#eef7e8;">0</div><div class="c " style="left:1316px;top:380px;width:73px;background:#eef7e8;">冬雨季施⋯</div><div class="c " style="left:1389px;top:380px;width:81px;background:#eef7e8;"></div><div class="c m n2" style="left:243px;top:403px;width:21px;background:#fff;padding:0;padding-top:1px">9</div><div class="c " style="left:264px;top:403px;width:121px;background:#eef7e8;"></div><div class="c m" style="left:385px;top:403px;width:41px;background:#eef7e8;"></div><div class="c " style="left:426px;top:403px;width:221px;background:#eef7e8;">生产工具用具使用费</div><div class="c " style="left:647px;top:403px;width:46px;background:#eef7e8;">项</div><div class="c " style="left:693px;top:403px;width:73px;background:#eef7e8;"></div><div class="c " style="left:766px;top:403px;width:86px;background:#eef7e8;">计算公式组价</div><div class="c num" style="left:852px;top:403px;width:181px;background:#eef7e8;">RGFYSJ+DJCS_RGFYSJ</div><div class="c r n2" style="left:1033px;top:403px;width:66px;background:#eef7e8;">0</div><div class="c r n2" style="left:1099px;top:403px;width:71px;background:#eef7e8;">1</div><div class="c r n2" style="left:1170px;top:403px;width:73px;background:#eef7e8;">0</div><div class="c r n2" style="left:1243px;top:403px;width:73px;background:#eef7e8;">0</div><div class="c " style="left:1316px;top:403px;width:73px;background:#eef7e8;">生产工具⋯</div><div class="c " style="left:1389px;top:403px;width:81px;background:#eef7e8;"></div><div class="c m n2" style="left:243px;top:426px;width:21px;background:#fff;padding:0;padding-top:1px">10</div><div class="c " style="left:264px;top:426px;width:121px;background:#eef7e8;"></div><div class="c m" style="left:385px;top:426px;width:41px;background:#eef7e8;"></div><div class="c " style="left:426px;top:426px;width:221px;background:#eef7e8;">施工用水、电、蒸汽费</div><div class="c " style="left:647px;top:426px;width:46px;background:#eef7e8;">项</div><div class="c " style="left:693px;top:426px;width:73px;background:#eef7e8;"></div><div class="c " style="left:766px;top:426px;width:86px;background:#eef7e8;">计算公式组价</div><div class="c num" style="left:852px;top:426px;width:181px;background:#eef7e8;"></div><div class="c r n2" style="left:1033px;top:426px;width:66px;background:#eef7e8;"></div><div class="c r n2" style="left:1099px;top:426px;width:71px;background:#eef7e8;">1</div><div class="c r n2" style="left:1170px;top:426px;width:73px;background:#eef7e8;">0</div><div class="c r n2" style="left:1243px;top:426px;width:73px;background:#eef7e8;">0</div><div class="c " style="left:1316px;top:426px;width:73px;background:#eef7e8;">施工用水⋯</div><div class="c " style="left:1389px;top:426px;width:81px;background:#eef7e8;"></div><div class="c m n2" style="left:243px;top:449px;width:21px;background:#fff;padding:0;padding-top:1px">11</div><div class="c " style="left:264px;top:449px;width:121px;background:#eef7e8;"></div><div class="c m" style="left:385px;top:449px;width:41px;background:#eef7e8;"></div><div class="c " style="left:426px;top:449px;width:221px;background:#eef7e8;">特殊地区施工增加费</div><div class="c " style="left:647px;top:449px;width:46px;background:#eef7e8;">项</div><div class="c " style="left:693px;top:449px;width:73px;background:#eef7e8;"></div><div class="c " style="left:766px;top:449px;width:86px;background:#eef7e8;">计算公式组价</div><div class="c num" style="left:852px;top:449px;width:181px;background:#eef7e8;"></div><div class="c r n2" style="left:1033px;top:449px;width:66px;background:#eef7e8;"></div><div class="c r n2" style="left:1099px;top:449px;width:71px;background:#eef7e8;">1</div><div class="c r n2" style="left:1170px;top:449px;width:73px;background:#eef7e8;">0</div><div class="c r n2" style="left:1243px;top:449px;width:73px;background:#eef7e8;">0</div><div class="c " style="left:1316px;top:449px;width:73px;background:#eef7e8;">偏远地区⋯</div><div class="c " style="left:1389px;top:449px;width:81px;background:#eef7e8;"></div><div class="c m n2" style="left:243px;top:472px;width:21px;background:#fff;padding:0;padding-top:1px">12</div><div class="c " style="left:264px;top:472px;width:121px;background:#eef7e8;"></div><div class="c m" style="left:385px;top:472px;width:41px;background:#eef7e8;"></div><div class="c " style="left:426px;top:472px;width:221px;background:#eef7e8;">已完工程及设备保护费</div><div class="c " style="left:647px;top:472px;width:46px;background:#eef7e8;">项</div><div class="c " style="left:693px;top:472px;width:73px;background:#eef7e8;"></div><div class="c " style="left:766px;top:472px;width:86px;background:#eef7e8;">计算公式组价</div><div class="c num" style="left:852px;top:472px;width:181px;background:#eef7e8;">RGFYSJ+DJCS_RGFYSJ</div><div class="c r n2" style="left:1033px;top:472px;width:66px;background:#eef7e8;">0</div><div class="c r n2" style="left:1099px;top:472px;width:71px;background:#eef7e8;">1</div><div class="c r n2" style="left:1170px;top:472px;width:73px;background:#eef7e8;">0</div><div class="c r n2" style="left:1243px;top:472px;width:73px;background:#eef7e8;">0</div><div class="c " style="left:1316px;top:472px;width:73px;background:#eef7e8;">已完工程⋯</div><div class="c " style="left:1389px;top:472px;width:81px;background:#eef7e8;"></div><div class="c m n2" style="left:243px;top:495px;width:21px;background:#fff;padding:0;padding-top:1px">13</div><div class="c " style="left:264px;top:495px;width:121px;background:#eef7e8;"></div><div class="c m" style="left:385px;top:495px;width:41px;background:#eef7e8;"></div><div class="c " style="left:426px;top:495px;width:221px;background:#eef7e8;">运土费</div><div class="c " style="left:647px;top:495px;width:46px;background:#eef7e8;">项</div><div class="c " style="left:693px;top:495px;width:73px;background:#eef7e8;"></div><div class="c " style="left:766px;top:495px;width:86px;background:#eef7e8;">计算公式组价</div><div class="c num" style="left:852px;top:495px;width:181px;background:#eef7e8;"></div><div class="c r n2" style="left:1033px;top:495px;width:66px;background:#eef7e8;"></div><div class="c r n2" style="left:1099px;top:495px;width:71px;background:#eef7e8;">1</div><div class="c r n2" style="left:1170px;top:495px;width:73px;background:#eef7e8;">0</div><div class="c r n2" style="left:1243px;top:495px;width:73px;background:#eef7e8;">0</div><div class="c " style="left:1316px;top:495px;width:73px;background:#eef7e8;">运土费</div><div class="c " style="left:1389px;top:495px;width:81px;background:#eef7e8;"></div><div class="c m n2" style="left:243px;top:518px;width:21px;background:#fff;padding:0;padding-top:1px">14</div><div class="c " style="left:264px;top:518px;width:121px;background:#eef7e8;"></div><div class="c m" style="left:385px;top:518px;width:41px;background:#eef7e8;"></div><div class="c " style="left:426px;top:518px;width:221px;background:#eef7e8;">施工队伍调遣费</div><div class="c " style="left:647px;top:518px;width:46px;background:#eef7e8;">项</div><div class="c " style="left:693px;top:518px;width:73px;background:#eef7e8;"></div><div class="c " style="left:766px;top:518px;width:86px;background:#eef7e8;">计算公式组价</div><div class="c num" style="left:852px;top:518px;width:181px;background:#eef7e8;"></div><div class="c r n2" style="left:1033px;top:518px;width:66px;background:#eef7e8;"></div><div class="c r n2" style="left:1099px;top:518px;width:71px;background:#eef7e8;">1</div><div class="c r n2" style="left:1170px;top:518px;width:73px;background:#eef7e8;">0</div><div class="c r n2" style="left:1243px;top:518px;width:73px;background:#eef7e8;">0</div><div class="c " style="left:1316px;top:518px;width:73px;background:#eef7e8;">施工队伍⋯</div><div class="c " style="left:1389px;top:518px;width:81px;background:#eef7e8;"></div><div class="c m n2" style="left:243px;top:541px;width:21px;background:#fff;padding:0;padding-top:1px">15</div><div class="c " style="left:264px;top:541px;width:121px;background:#eef7e8;"></div><div class="c m" style="left:385px;top:541px;width:41px;background:#eef7e8;"></div><div class="c " style="left:426px;top:541px;width:221px;background:#eef7e8;">大型施工机械调遣费</div><div class="c " style="left:647px;top:541px;width:46px;background:#eef7e8;">项</div><div class="c " style="left:693px;top:541px;width:73px;background:#eef7e8;"></div><div class="c " style="left:766px;top:541px;width:86px;background:#eef7e8;">计算公式组价</div><div class="c num" style="left:852px;top:541px;width:181px;background:#eef7e8;"></div><div class="c r n2" style="left:1033px;top:541px;width:66px;background:#eef7e8;"></div><div class="c r n2" style="left:1099px;top:541px;width:71px;background:#eef7e8;">1</div><div class="c r n2" style="left:1170px;top:541px;width:73px;background:#eef7e8;">0</div><div class="c r n2" style="left:1243px;top:541px;width:73px;background:#eef7e8;">0</div><div class="c " style="left:1316px;top:541px;width:73px;background:#eef7e8;">大型施工⋯</div><div class="c " style="left:1389px;top:541px;width:81px;background:#eef7e8;"></div><div class="c m n2" style="left:243px;top:564px;width:21px;background:#fff;padding:0;padding-top:1px"></div><div class="c " style="left:264px;top:564px;width:121px;background:#dddddd;"></div><div class="c m" style="left:385px;top:564px;width:41px;background:#dddddd;"></div><div class="c " style="left:426px;top:564px;width:221px;background:#dddddd;">单价措施项目清单</div><div class="c " style="left:647px;top:564px;width:46px;background:#dddddd;"></div><div class="c " style="left:693px;top:564px;width:73px;background:#dddddd;"></div><div class="c " style="left:766px;top:564px;width:86px;background:#dddddd;"></div><div class="c num" style="left:852px;top:564px;width:181px;background:#dddddd;"></div><div class="c r n2" style="left:1033px;top:564px;width:66px;background:#dddddd;"></div><div class="c r n2" style="left:1099px;top:564px;width:71px;background:#dddddd;"></div><div class="c r n2" style="left:1170px;top:564px;width:73px;background:#dddddd;"></div><div class="c r n2" style="left:1243px;top:564px;width:73px;background:#dddddd;">0</div><div class="c " style="left:1316px;top:564px;width:73px;background:#dddddd;">单价措施</div><div class="c " style="left:1389px;top:564px;width:81px;background:#dddddd;"></div><div class="c m n2" style="left:243px;top:587px;width:21px;background:#fff;padding:0;padding-top:1px">16</div><div class="c " style="left:264px;top:587px;width:121px;background:#deeafc;"></div><div class="c m" style="left:385px;top:587px;width:41px;background:#deeafc;"></div><div class="c " style="left:426px;top:587px;width:221px;background:#deeafc;">低压封闭式插接母线槽</div><div class="c " style="left:647px;top:587px;width:46px;background:#deeafc;"><span class="num">m</span></div><div class="c " style="left:693px;top:587px;width:73px;background:#deeafc;"></div><div class="c " style="left:766px;top:587px;width:86px;background:#deeafc;">可计量清单</div><div class="c num" style="left:852px;top:587px;width:181px;background:#deeafc;"></div><div class="c r n2" style="left:1033px;top:587px;width:66px;background:#deeafc;"></div><div class="c r n2" style="left:1099px;top:587px;width:71px;background:#deeafc;">1</div><div class="c r n2" style="left:1170px;top:587px;width:73px;background:#deeafc;">0</div><div class="c r n2" style="left:1243px;top:587px;width:73px;background:#deeafc;">0</div><div class="c " style="left:1316px;top:587px;width:73px;background:#deeafc;"></div><div class="c " style="left:1389px;top:587px;width:81px;background:#deeafc;"></div><div class="c m n2" style="left:243px;top:610px;width:21px;background:#fde3c4;padding:0;padding-top:1px"></div><div class="c " style="left:264px;top:610px;width:121px;background:#93c9f8;"></div><div class="c m" style="left:385px;top:610px;width:41px;background:#93c9f8;">定</div><div class="c " style="left:426px;top:610px;width:221px;background:#93c9f8;"><span style="word-spacing:3px">安装高压配电柜 安装单母线柜 互感器柜</span></div><div class="c " style="left:647px;top:610px;width:46px;background:#93c9f8;">台</div><div class="c " style="left:693px;top:610px;width:73px;background:#93c9f8;"></div><div class="c " style="left:766px;top:610px;width:86px;background:#93c9f8;"></div><div class="c num" style="left:852px;top:610px;width:181px;background:#93c9f8;"></div><div class="c r n2" style="left:1033px;top:610px;width:66px;background:#93c9f8;"></div><div class="c r n2" style="left:1099px;top:610px;width:71px;background:#fff;">0</div><div class="ab" style="left:1098px;top:609px;width:72px;height:24px;border:2px solid #3e8ef7"></div><div class="c r n2" style="left:1170px;top:610px;width:73px;background:#93c9f8;">349.26</div><div class="c r n2" style="left:1243px;top:610px;width:73px;background:#93c9f8;">0</div><div class="c " style="left:1316px;top:610px;width:73px;background:#93c9f8;"></div><div class="c " style="left:1389px;top:610px;width:81px;background:#93c9f8;"></div><div class="ab" style="left:272px;top:190px;width:1px;height:385px;background:#f5c37f"></div><div class="ab" style="left:282px;top:213px;width:1px;height:339px;background:#f5c37f"></div><div class="ab" style="left:282px;top:229px;width:17px;height:1px;background:#f5c37f"></div><div class="t n2" style="left:304px;top:222px">1</div><div class="ab" style="left:282px;top:252px;width:17px;height:1px;background:#f5c37f"></div><div class="t n2" style="left:304px;top:245px">2</div><div class="ab" style="left:282px;top:275px;width:17px;height:1px;background:#f5c37f"></div><div class="t n2" style="left:304px;top:268px">3</div><div class="ab" style="left:282px;top:298px;width:17px;height:1px;background:#f5c37f"></div><div class="t n2" style="left:304px;top:291px">4</div><div class="ab" style="left:282px;top:321px;width:17px;height:1px;background:#f5c37f"></div><div class="t n2" style="left:304px;top:314px">5</div><div class="ab" style="left:282px;top:344px;width:17px;height:1px;background:#f5c37f"></div><div class="t n2" style="left:304px;top:337px">6</div><div class="ab" style="left:282px;top:367px;width:17px;height:1px;background:#f5c37f"></div><div class="t n2" style="left:304px;top:360px">7</div><div class="ab" style="left:282px;top:390px;width:17px;height:1px;background:#f5c37f"></div><div class="t n2" style="left:304px;top:383px">8</div><div class="ab" style="left:282px;top:413px;width:17px;height:1px;background:#f5c37f"></div><div class="t n2" style="left:304px;top:406px">9</div><div class="ab" style="left:282px;top:436px;width:17px;height:1px;background:#f5c37f"></div><div class="t n2" style="left:304px;top:429px">10</div><div class="ab" style="left:282px;top:459px;width:17px;height:1px;background:#f5c37f"></div><div class="t n2" style="left:304px;top:452px">11</div><div class="ab" style="left:282px;top:482px;width:17px;height:1px;background:#f5c37f"></div><div class="t n2" style="left:304px;top:475px">12</div><div class="ab" style="left:282px;top:505px;width:17px;height:1px;background:#f5c37f"></div><div class="t n2" style="left:304px;top:498px">13</div><div class="ab" style="left:282px;top:528px;width:17px;height:1px;background:#f5c37f"></div><div class="t n2" style="left:304px;top:521px">14</div><div class="ab" style="left:282px;top:551px;width:17px;height:1px;background:#f5c37f"></div><div class="t n2" style="left:304px;top:544px">15</div><div class="ab" style="left:272px;top:206px;width:4px;height:1px;background:#f5c37f"></div><div class="ab" style="left:272px;top:574px;width:4px;height:1px;background:#f5c37f"></div><div class="ab" style="left:266px;top:177px;width:13px;height:13px;border:1px solid #8a8a8a;background:#fff"></div><div class="ab" style="left:269px;top:183px;width:7px;height:1px;background:#222"></div><div class="ab" style="left:276px;top:200px;width:13px;height:13px;border:1px solid #8a8a8a;background:#fff"></div><div class="ab" style="left:279px;top:206px;width:7px;height:1px;background:#222"></div><div class="ab" style="left:276px;top:568px;width:13px;height:13px;border:1px solid #8a8a8a;background:#fff"></div><div class="ab" style="left:279px;top:574px;width:7px;height:1px;background:#222"></div><div class="t" style="left:294px;top:200px;font-size:12px">一</div><div class="t" style="left:294px;top:568px;font-size:12px">二</div><div class="ab" style="left:282px;top:581px;width:1px;height:17px;background:#f5c37f"></div><div class="ab" style="left:282px;top:597px;width:4px;height:1px;background:#f5c37f"></div><div class="ab" style="left:286px;top:591px;width:13px;height:13px;border:1px solid #8a8a8a;background:#fff"></div><div class="ab" style="left:289px;top:597px;width:7px;height:1px;background:#222"></div><div class="t n2 cd" style="left:304px;top:591px">TX14002001</div><div class="ab" style="left:292px;top:604px;width:1px;height:17px;background:#f5c37f"></div><div class="ab" style="left:292px;top:620px;width:16px;height:1px;background:#f5c37f"></div><div class="t n2 cd" style="left:313px;top:614px">TSD1-002</div><div class="ab" style="left:262px;top:609px;width:2px;height:23px;background:#3e8ef7"></div><div class="ab" style="left:241px;top:658px;width:1679px;height:2px;background:#d0d0d0"></div><div class="ab" style="left:241px;top:660px;width:1679px;height:30px;background:#f4f4f4"></div><div class="ab" style="left:241px;top:689px;width:1679px;height:1px;background:#c4c4c4"></div><div class="ab" style="left:250px;top:665px;width:90px;height:24px;border-radius:3px 3px 0 0;background:#3e97f5"></div><div class="t" style="left:250px;top:671px;width:90px;text-align:center;font-weight:500;color:#fff">工料机显示</div><div class="ab" style="left:342px;top:665px;width:78px;height:24px;border-radius:3px 3px 0 0;background:#c2c2c2"></div><div class="t" style="left:342px;top:671px;width:78px;text-align:center;color:#222">单价构成</div><div class="ab" style="left:422px;top:665px;width:78px;height:24px;border-radius:3px 3px 0 0;background:#c2c2c2"></div><div class="t" style="left:422px;top:671px;width:78px;text-align:center;color:#222">标准换算</div><div class="ab" style="left:502px;top:665px;width:78px;height:24px;border-radius:3px 3px 0 0;background:#c2c2c2"></div><div class="t" style="left:502px;top:671px;width:78px;text-align:center;color:#222">换算信息</div><div class="ab" style="left:582px;top:665px;width:90px;height:24px;border-radius:3px 3px 0 0;background:#c2c2c2"></div><div class="t" style="left:582px;top:671px;width:90px;text-align:center;color:#222">特征及内容</div><div class="ab" style="left:674px;top:665px;width:90px;height:24px;border-radius:3px 3px 0 0;background:#c2c2c2"></div><div class="t" style="left:674px;top:671px;width:90px;text-align:center;color:#222">工程量明细</div><div class="ab" style="left:766px;top:665px;width:78px;height:24px;border-radius:3px 3px 0 0;background:#c2c2c2"></div><div class="t" style="left:766px;top:671px;width:78px;text-align:center;color:#222">说明信息</div><div class="ab" style="left:242px;top:690px;width:1007px;height:1px;background:#c2c2c2"></div><div class="ab" style="left:242px;top:690px;width:1px;height:139px;background:#c2c2c2"></div><div class="c h" style="left:243px;top:691px;width:21px;height:23px;line-height:25px;background:#ececec;"></div><div class="c h" style="left:264px;top:691px;width:73px;height:23px;line-height:25px;background:#ececec;background:#fde3c4;font-weight:bold;color:#000;">编码</div><div class="c h" style="left:337px;top:691px;width:38px;height:23px;line-height:25px;background:#ececec;">类别</div><div class="c h" style="left:375px;top:691px;width:127px;height:23px;line-height:25px;background:#ececec;">名称</div><div class="c h" style="left:502px;top:691px;width:75px;height:23px;line-height:25px;background:#ececec;">规格及型号</div><div class="c h" style="left:577px;top:691px;width:41px;height:23px;line-height:25px;background:#ececec;">单位</div><div class="c h" style="left:618px;top:691px;width:49px;height:23px;line-height:25px;background:#ececec;">损耗率</div><div class="c h" style="left:667px;top:691px;width:49px;height:23px;line-height:25px;background:#ececec;">含量</div><div class="c h" style="left:716px;top:691px;width:49px;height:23px;line-height:25px;background:#ececec;">数量</div><div class="c h" style="left:765px;top:691px;width:65px;height:23px;line-height:25px;background:#ececec;">定额价</div><div class="c h" style="left:830px;top:691px;width:65px;height:23px;line-height:25px;background:#ececec;">市场价</div><div class="c h" style="left:895px;top:691px;width:65px;height:23px;line-height:25px;background:#ececec;">合价</div><div class="c h" style="left:960px;top:691px;width:61px;height:23px;line-height:25px;background:#ececec;">是否利旧</div><div class="c h" style="left:1021px;top:691px;width:57px;height:23px;line-height:25px;background:#ececec;">是否暂估</div><div class="c h" style="left:1078px;top:691px;width:57px;height:23px;line-height:25px;background:#ececec;">锁定数量</div><div class="c h" style="left:1135px;top:691px;width:57px;height:23px;line-height:25px;background:#ececec;">是否计价</div><div class="c h" style="left:1192px;top:691px;width:57px;height:23px;line-height:25px;background:#ececec;">原始含量</div><div class="c m n2" style="left:243px;top:714px;width:21px;background:#fde3c4;padding:0;padding-top:1px"><b>1</b></div><div class="c n2 cd" style="left:264px;top:714px;width:73px;background:#fff;">R00001</div><div class="c m" style="left:337px;top:714px;width:38px;background:#93c9f8;">人</div><div class="c " style="left:375px;top:714px;width:127px;background:#93c9f8;">技工</div><div class="c n2 cd" style="left:502px;top:714px;width:75px;background:#93c9f8;"></div><div class="c m" style="left:577px;top:714px;width:41px;background:#93c9f8;">工日</div><div class="c " style="left:618px;top:714px;width:49px;background:#93c9f8;"></div><div class="c r n2" style="left:667px;top:714px;width:49px;background:#93c9f8;">2.31</div><div class="c r n2" style="left:716px;top:714px;width:49px;background:#93c9f8;">0</div><div class="c r n2" style="left:765px;top:714px;width:65px;background:#93c9f8;">114</div><div class="c r n2" style="left:830px;top:714px;width:65px;background:#93c9f8;">114</div><div class="c r n2" style="left:895px;top:714px;width:65px;background:#93c9f8;">0</div><div class="c " style="left:960px;top:714px;width:61px;background:#93c9f8;"></div><div class="c " style="left:1021px;top:714px;width:57px;background:#93c9f8;"></div><div class="c " style="left:1078px;top:714px;width:57px;background:#93c9f8;"></div><div class="c " style="left:1135px;top:714px;width:57px;background:#93c9f8;"></div><div class="c r n2" style="left:1192px;top:714px;width:57px;background:#93c9f8;">2.31</div><div class="cbd" style="left:983px;top:718px"></div><div class="cb" style="left:1099px;top:718px"></div><div class="cbc" style="left:1156px;top:718px"><svg class="ab" style="left:1px;top:1px" width="12" height="12" fill="none"><path d="M2 6l3 3 5-5.5" stroke="#fff" stroke-width="1.8"/></svg></div><div class="c m n2" style="left:243px;top:737px;width:21px;background:#fff;padding:0;padding-top:1px">2</div><div class="c n2 cd" style="left:264px;top:737px;width:73px;background:#fff;">C00001</div><div class="c m" style="left:337px;top:737px;width:38px;background:#fff;">材</div><div class="c " style="left:375px;top:737px;width:127px;background:#fff;">螺栓(M12×100以内)</div><div class="c n2 cd" style="left:502px;top:737px;width:75px;background:#fff;"></div><div class="c m" style="left:577px;top:737px;width:41px;background:#fff;">套</div><div class="c " style="left:618px;top:737px;width:49px;background:#fff;"></div><div class="c r n2" style="left:667px;top:737px;width:49px;background:#fff;">6.06</div><div class="c r n2" style="left:716px;top:737px;width:49px;background:#fff;">0</div><div class="c r n2" style="left:765px;top:737px;width:65px;background:#fff;">0</div><div class="c r n2" style="left:830px;top:737px;width:65px;background:#fff;">0</div><div class="c r n2" style="left:895px;top:737px;width:65px;background:#fff;">0</div><div class="c " style="left:960px;top:737px;width:61px;background:#fff;"></div><div class="c " style="left:1021px;top:737px;width:57px;background:#fff;"></div><div class="c " style="left:1078px;top:737px;width:57px;background:#fff;"></div><div class="c " style="left:1135px;top:737px;width:57px;background:#fff;"></div><div class="c r n2" style="left:1192px;top:737px;width:57px;background:#fdfaf4;">6.06</div><div class="cb" style="left:983px;top:741px"></div><div class="cb" style="left:1042px;top:741px"></div><div class="cb" style="left:1099px;top:741px"></div><div class="cbc" style="left:1156px;top:741px"><svg class="ab" style="left:1px;top:1px" width="12" height="12" fill="none"><path d="M2 6l3 3 5-5.5" stroke="#fff" stroke-width="1.8"/></svg></div><div class="c m n2" style="left:243px;top:760px;width:21px;background:#fff;padding:0;padding-top:1px">3</div><div class="c n2 cd" style="left:264px;top:760px;width:73px;background:#fff;">TXJ010</div><div class="c m" style="left:337px;top:760px;width:38px;background:#fff;">机</div><div class="c " style="left:375px;top:760px;width:127px;background:#fff;">汽车式起重机</div><div class="c n2 cd" style="left:502px;top:760px;width:75px;background:#fff;">5t</div><div class="c m" style="left:577px;top:760px;width:41px;background:#fff;">台班</div><div class="c " style="left:618px;top:760px;width:49px;background:#fff;"></div><div class="c r n2" style="left:667px;top:760px;width:49px;background:#fff;">0.1</div><div class="c r n2" style="left:716px;top:760px;width:49px;background:#fff;">0</div><div class="c r n2" style="left:765px;top:760px;width:65px;background:#fff;">516</div><div class="c r n2" style="left:830px;top:760px;width:65px;background:#fff;">516</div><div class="c r n2" style="left:895px;top:760px;width:65px;background:#fff;">0</div><div class="c " style="left:960px;top:760px;width:61px;background:#fff;"></div><div class="c " style="left:1021px;top:760px;width:57px;background:#fff;"></div><div class="c " style="left:1078px;top:760px;width:57px;background:#fff;"></div><div class="c " style="left:1135px;top:760px;width:57px;background:#fff;"></div><div class="c r n2" style="left:1192px;top:760px;width:57px;background:#fdfaf4;">0.1</div><div class="cbd" style="left:983px;top:764px"></div><div class="cb" style="left:1099px;top:764px"></div><div class="cbc" style="left:1156px;top:764px"><svg class="ab" style="left:1px;top:1px" width="12" height="12" fill="none"><path d="M2 6l3 3 5-5.5" stroke="#fff" stroke-width="1.8"/></svg></div><div class="c m n2" style="left:243px;top:783px;width:21px;background:#fff;padding:0;padding-top:1px">4</div><div class="c n2 cd" style="left:264px;top:783px;width:73px;background:#fff;">TXJ016</div><div class="c m" style="left:337px;top:783px;width:38px;background:#fff;">机</div><div class="c " style="left:375px;top:783px;width:127px;background:#fff;">载重汽车</div><div class="c n2 cd" style="left:502px;top:783px;width:75px;background:#fff;">5t</div><div class="c m" style="left:577px;top:783px;width:41px;background:#fff;">台班</div><div class="c " style="left:618px;top:783px;width:49px;background:#fff;"></div><div class="c r n2" style="left:667px;top:783px;width:49px;background:#fff;">0.06</div><div class="c r n2" style="left:716px;top:783px;width:49px;background:#fff;">0</div><div class="c r n2" style="left:765px;top:783px;width:65px;background:#fff;">372</div><div class="c r n2" style="left:830px;top:783px;width:65px;background:#fff;">372</div><div class="c r n2" style="left:895px;top:783px;width:65px;background:#fff;">0</div><div class="c " style="left:960px;top:783px;width:61px;background:#fff;"></div><div class="c " style="left:1021px;top:783px;width:57px;background:#fff;"></div><div class="c " style="left:1078px;top:783px;width:57px;background:#fff;"></div><div class="c " style="left:1135px;top:783px;width:57px;background:#fff;"></div><div class="c r n2" style="left:1192px;top:783px;width:57px;background:#fdfaf4;">0.06</div><div class="cbd" style="left:983px;top:787px"></div><div class="cb" style="left:1099px;top:787px"></div><div class="cbc" style="left:1156px;top:787px"><svg class="ab" style="left:1px;top:1px" width="12" height="12" fill="none"><path d="M2 6l3 3 5-5.5" stroke="#fff" stroke-width="1.8"/></svg></div><div class="c m n2" style="left:243px;top:806px;width:21px;background:#fff;padding:0;padding-top:1px">5</div><div class="c n2 cd" style="left:264px;top:806px;width:73px;background:#fff;">TXJ004</div><div class="c m" style="left:337px;top:806px;width:38px;background:#fff;">机</div><div class="c " style="left:375px;top:806px;width:127px;background:#fff;">交流弧焊机</div><div class="c n2 cd" style="left:502px;top:806px;width:75px;background:#fff;"></div><div class="c m" style="left:577px;top:806px;width:41px;background:#fff;">台班</div><div class="c " style="left:618px;top:806px;width:49px;background:#fff;"></div><div class="c r n2" style="left:667px;top:806px;width:49px;background:#fff;">0.1</div><div class="c r n2" style="left:716px;top:806px;width:49px;background:#fff;">0</div><div class="c r n2" style="left:765px;top:806px;width:65px;background:#fff;">120</div><div class="c r n2" style="left:830px;top:806px;width:65px;background:#fff;">120</div><div class="c r n2" style="left:895px;top:806px;width:65px;background:#fff;">0</div><div class="c " style="left:960px;top:806px;width:61px;background:#fff;"></div><div class="c " style="left:1021px;top:806px;width:57px;background:#fff;"></div><div class="c " style="left:1078px;top:806px;width:57px;background:#fff;"></div><div class="c " style="left:1135px;top:806px;width:57px;background:#fff;"></div><div class="c r n2" style="left:1192px;top:806px;width:57px;background:#fdfaf4;">0.1</div><div class="cbd" style="left:983px;top:810px"></div><div class="cb" style="left:1099px;top:810px"></div><div class="cbc" style="left:1156px;top:810px"><svg class="ab" style="left:1px;top:1px" width="12" height="12" fill="none"><path d="M2 6l3 3 5-5.5" stroke="#fff" stroke-width="1.8"/></svg></div><div class="ab" style="left:263px;top:713px;width:74px;height:24px;border:2px solid #3e8ef7;border-right-color:#555;border-bottom-color:#555"></div><div class="ab" style="left:321px;top:723px;width:0;height:0;border-left:5px solid transparent;border-right:5px solid transparent;border-top:5px solid #3e8ef7"></div><div class="ab" style="left:0px;top:1008px;width:1920px;height:30px;background:#f5f5f5;border-top:1px solid #d8d8d8"></div><div class="t" style="left:10px;top:1018px;color:#222">计税方式：增值税</div><div class="t" style="left:149px;top:1018px;color:#222">通信建设工程量清单计价规范(2009)</div><div class="t" style="left:384px;top:1018px;color:#222">信息通信建设工程预算定额(2016年451号)</div><div class="t" style="left:652px;top:1018px;color:#222">第一册 通信电源设备安装工程</div><div class="t" style="left:855px;top:1018px;color:#222">世界上最好的</div><div class="ab" style="left:132px;top:1015px;width:1px;height:18px;background:#c8c8c8"></div><div class="ab" style="left:367px;top:1015px;width:1px;height:18px;background:#c8c8c8"></div><div class="ab" style="left:635px;top:1015px;width:1px;height:18px;background:#c8c8c8"></div><div class="ab" style="left:838px;top:1015px;width:1px;height:18px;background:#c8c8c8"></div><div class="ab" style="left:952px;top:1015px;width:1px;height:18px;background:#c8c8c8"></div><div class="ab" style="left:1656px;top:1013px;width:22px;height:22px;background:#fff;border:1px solid #dcdcdc;border-radius:3px"></div><div class="ab" style="left:1661px;top:1017.5px;width:12px;height:7.5px;background:#3e97f5;border-radius:2px"></div><div class="ab" style="left:1661px;top:1026px;width:12px;height:3.5px;background:#3e97f5;border-radius:1.5px"></div><div class="ab" style="left:1688px;top:1018px;width:5px;height:12px;background:#8a8a8a;border-radius:1px"></div><div class="ab" style="left:1695px;top:1018px;width:5px;height:12px;background:#8a8a8a;border-radius:1px"></div><div class="t" style="left:1719px;top:1018px;color:#222;font-size:12.5px">100%</div><div class="ab" style="left:1762px;top:1023px;width:12px;height:2px;background:#333"></div><div class="ab" style="left:1785px;top:1023px;width:106px;height:2px;background:#cdcdcd"></div><div class="ab" style="left:1817px;top:1018px;width:11px;height:11px;background:#fff;border:1px solid #444;border-radius:50%"></div><div class="ab" style="left:1902px;top:1023px;width:12px;height:2px;background:#333"></div><div class="ab" style="left:1907px;top:1018px;width:2px;height:12px;background:#333"></div></body></html>
